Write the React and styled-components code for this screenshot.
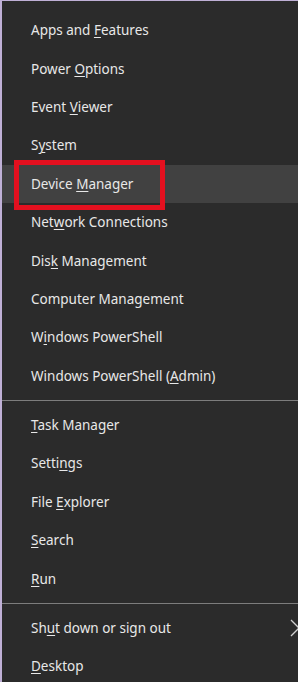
import React from 'react';
import styled, { createGlobalStyle } from 'styled-components';

const GlobalStyle = createGlobalStyle`
  html, body {
    margin: 0;
    padding: 0;
    background: #2b2b2b;
  }
`;

const Menu = styled.div`
  width: 298px;
  height: 682px;
  box-sizing: border-box;
  overflow: hidden;
  background: #2b2b2b;
  border-left: 2px solid #bfb0d6;
  border-top: 1px solid #bfb0d6;
  padding-top: 10px;
  display: flex;
  flex-direction: column;
  font-family: "Noto Sans", "Open Sans", sans-serif;
  font-size: 13.5px;
  color: #e8e8e8;
`;

const Item = styled.div`
  position: relative;
  height: 38.4px;
  flex: none;
  display: flex;
  align-items: center;
  padding-left: 29px;
  background: ${p => (p.$active ? '#414141' : 'transparent')};

  ${p => p.$boxed && `
    &::after {
      content: '';
      position: absolute;
      left: 12px;
      width: 151px;
      top: -5px;
      bottom: -7px;
      box-sizing: border-box;
      border: 5px solid #e4101f;
    }
  `}
`;

const Key = styled.span`
  text-decoration: underline;
  text-underline-offset: 2px;
  text-decoration-thickness: 1px;
`;

const Separator = styled.div`
  flex: none;
  height: 11px;
  display: flex;
  align-items: center;

  &::before {
    content: '';
    flex: 1;
    height: 1px;
    background: #7d7d7d;
  }
`;

const Chevron = styled.svg`
  margin-left: auto;
  margin-right: -6px;
  flex: none;
`;

function Label({ text, k }) {
  if (k == null) return <span>{text}</span>;
  return (
    <span>
      {text.slice(0, k)}
      <Key>{text[k]}</Key>
      {text.slice(k + 1)}
    </span>
  );
}

const groups = [
  [
    { text: 'Apps and Features', k: 9 },
    { text: 'Power Options', k: 6 },
    { text: 'Event Viewer', k: 6 },
    { text: 'System', k: 1 },
    { text: 'Device Manager', k: 7, active: true, boxed: true },
    { text: 'Network Connections', k: 3 },
    { text: 'Disk Management', k: 3 },
    { text: 'Computer Management' },
    { text: 'Windows PowerShell', k: 1 },
    { text: 'Windows PowerShell (Admin)', k: 20 },
  ],
  [
    { text: 'Task Manager', k: 0 },
    { text: 'Settings', k: 5 },
    { text: 'File Explorer', k: 5 },
    { text: 'Search', k: 0 },
    { text: 'Run', k: 0 },
  ],
  [
    { text: 'Shut down or sign out', k: 2, sub: true },
    { text: 'Desktop', k: 0 },
  ],
];

export default function App() {
  return (
    <>
      <GlobalStyle />
      <Menu>
        {groups.map((items, gi) => (
          <React.Fragment key={gi}>
            {gi > 0 && <Separator />}
            {items.map(it => (
              <Item key={it.text} $active={it.active} $boxed={it.boxed}>
                <Label text={it.text} k={it.k} />
                {it.sub && (
                  <Chevron width="14" height="18" viewBox="0 0 14 18">
                    <path d="M1 1 L9 9 L1 17" fill="none" stroke="#d0d0d0" strokeWidth="1.3" />
                  </Chevron>
                )}
              </Item>
            ))}
          </React.Fragment>
        ))}
      </Menu>
    </>
  );
}
